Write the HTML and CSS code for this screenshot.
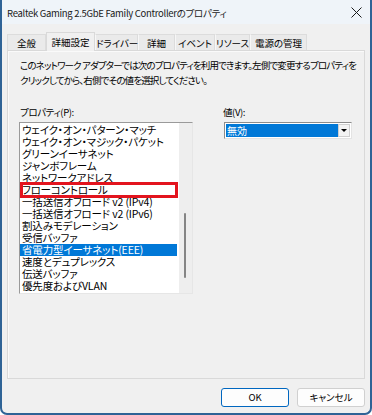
FILE: index.html
```html
<!DOCTYPE html>
<html lang="ja">
<head>
<meta charset="utf-8">
<title>Realtek Gaming 2.5GbE Family Controllerのプロパティ</title>
<link rel="stylesheet" href="styles.css">
</head>
<body>
<div class="window">
  <div class="titlebar">
    <span class="title">Realtek Gaming 2.5GbE Family Controllerのプロパティ</span>
    <svg class="close" width="11" height="11" viewBox="0 0 11 11"><path d="M0.5 0.5 L10.5 10.5 M10.5 0.5 L0.5 10.5" stroke="#1a1a1a" stroke-width="1" fill="none"/></svg>
  </div>
  <div class="content">
    <div class="tabs">
      <div class="tab t1">全般</div>
      <div class="tab t2 active">詳細設定</div>
      <div class="tab t3">ドライバー</div>
      <div class="tab t4">詳細</div>
      <div class="tab t5">イベント</div>
      <div class="tab t6">リソース</div>
      <div class="tab t7">電源の管理</div>
    </div>
    <div class="panel">
      <p class="desc">このネットワーク アダプターでは次のプロパティを利用できます。左側で変更するプロパティを<br>クリックしてから、右側でその値を選択してください。</p>
      <div class="cols">
        <div class="col-left">
          <div class="label">プロパティ(P):</div>
          <div class="listbox">
            <ul class="items">
              <li class="item">ウェイク・オン・パターン・マッチ</li>
              <li class="item">ウェイク・オン・マジック・パケット</li>
              <li class="item">グリーンイーサネット</li>
              <li class="item">ジャンボフレーム</li>
              <li class="item">ネットワークアドレス</li>
              <li class="item marked">フローコントロール</li>
              <li class="item">一括送信オフロード v2 (IPv4)</li>
              <li class="item">一括送信オフロード v2 (IPv6)</li>
              <li class="item">割込みモデレーション</li>
              <li class="item">受信バッファ</li>
              <li class="item selected">省電力型イーサネット(EEE)</li>
              <li class="item">速度とデュプレックス</li>
              <li class="item">伝送バッファ</li>
              <li class="item">優先度およびVLAN</li>
            </ul>
            <div class="scrollbar"><div class="thumb"></div></div>
          </div>
        </div>
        <div class="col-right">
          <div class="label">値(V):</div>
          <div class="select">
            <div class="sel-value">無効</div>
            <div class="sel-btn"><span class="tri"></span></div>
          </div>
        </div>
      </div>
    </div>
    <div class="buttons">
      <div class="btn primary">OK</div>
      <div class="btn">キャンセル</div>
    </div>
  </div>
</div>
</body>
</html>
```

FILE: styles.css
```css
html, body {
  margin: 0;
  padding: 0;
  background: #ffffff;
}
body {
  font-family: "Noto Sans CJK JP", "Noto Sans", sans-serif;
  font-size: 9.5px;
  font-feature-settings: "palt";
  color: #000;
}
.window {
  width: 372px;
  height: 415px;
  box-sizing: border-box;
  background: #f0f0f0;
  border: 2px solid #2f6396;
  border-top: 0;
  border-radius: 0 0 7px 7px;
  display: flex;
  flex-direction: column;
}
.titlebar {
  height: 24px;
  flex: none;
  background: #eff4f9;
  display: flex;
  align-items: center;
  justify-content: space-between;
  padding: 0 8px 0 5px;
}
.title {
  font-size: 9.5px;
  color: #1a1a1a;
  line-height: 14px;
  padding-top: 1px;
  white-space: nowrap;
  letter-spacing: -0.3px;
}
.close { display: block; margin-top: 1px; }
.content {
  padding: 0 5px;
  flex: 1;
  display: flex;
  flex-direction: column;
}
.tabs {
  margin-top: 8px;
  height: 18px;
  display: flex;
  align-items: flex-end;
  position: relative;
  z-index: 1;
}
.tab {
  box-sizing: border-box;
  height: 16px;
  background: #eaeaea;
  border: 1px solid #dcdcdc;
  border-bottom: 0;
  border-left-color: #f7f7f7;
  text-align: center;
  line-height: 14px;
  padding-top: 1px;
  white-space: nowrap;
}
.tab.t1 { width: 39px; border-left-color: #dcdcdc; }
.tab.t2 { width: 49px; }
.tab.t3 { width: 43px; }
.tab.t4 { width: 37px; }
.tab.t5 { width: 40px; }
.tab.t6 { width: 35px; }
.tab.t7 { width: 57px; }
.tab.active {
  height: 19px;
  margin-bottom: -1px;
  background: #f0f0f0;
  border-color: #d9d9d9;
  padding-top: 2px;
}
.panel {
  box-sizing: border-box;
  height: 329px;
  border: 1px solid #d9d9d9;
  box-shadow: inset 1px 1px 0 #fafafa;
  background: #f0f0f0;
  padding: 7px 0 0 11px;
}
.desc {
  margin: 0 0 0 1px;
  line-height: 15px;
  white-space: nowrap;
  letter-spacing: -0.85px;
}
.cols {
  display: flex;
  margin-top: 17px;
}
.col-left {
  width: 174px;
  flex: none;
}
.col-right {
  margin-left: 29px;
}
.label {
  line-height: 14px;
  height: 14px;
  margin: 0 0 3px 1px;
  white-space: nowrap;
  letter-spacing: -0.4px;
}
.listbox {
  box-sizing: border-box;
  width: 174px;
  height: 172px;
  background: #fff;
  border: 1px solid;
  border-color: #9a9a9a #e6e6e6 #e6e6e6 #9a9a9a;
  display: flex;
}
.items {
  list-style: none;
  margin: 0;
  padding: 1px 0 0 0;
  flex: 1;
  font-size: 10.5px;
  letter-spacing: -0.15px;
}
.item {
  height: 12px;
  line-height: 12px;
  padding-left: 2px;
  margin-right: 2px;
  white-space: nowrap;
}
.item.selected {
  background: #0078d7;
  color: #fff;
}
.item.marked {
  position: relative;
}
.item.marked::after {
  content: "";
  position: absolute;
  left: 0;
  right: -1px;
  top: -2px;
  bottom: -2px;
  border: 3px solid #e3141e;
}
.scrollbar {
  width: 13px;
  flex: none;
  background: #eeeeee;
  padding-top: 90px;
  box-sizing: border-box;
}
.thumb {
  width: 2px;
  height: 65px;
  margin-left: 5px;
  border-radius: 1px;
  background: #858585;
}
.select {
  box-sizing: border-box;
  width: 128px;
  height: 17px;
  margin: 1px 0 0 2px;
  border: 1px solid;
  border-color: #8c8c8c #e3e3e3 #e3e3e3 #8c8c8c;
  background: #fff;
  padding: 1px;
  display: flex;
}
.sel-value {
  flex: 1;
  background: #0078d7;
  color: #fff;
  line-height: 13px;
  padding-left: 1px;
  font-size: 10px;
}
.sel-btn {
  width: 12px;
  flex: none;
  box-sizing: border-box;
  border: 1px solid #cfcfcf;
  background: #f3f3f3;
  display: flex;
  align-items: center;
  justify-content: center;
}
.tri {
  width: 0;
  height: 0;
  border-left: 3px solid transparent;
  border-right: 3px solid transparent;
  border-top: 3px solid #000;
}
.buttons {
  display: flex;
  justify-content: flex-end;
  gap: 8px;
  margin-top: 9px;
}
.btn {
  box-sizing: border-box;
  width: 68px;
  height: 19px;
  border: 1px solid #d0d0d0;
  border-radius: 3px;
  background: #fdfdfd;
  text-align: center;
  line-height: 17px;
}
.btn.primary {
  border-color: #0067c0;
}
```
